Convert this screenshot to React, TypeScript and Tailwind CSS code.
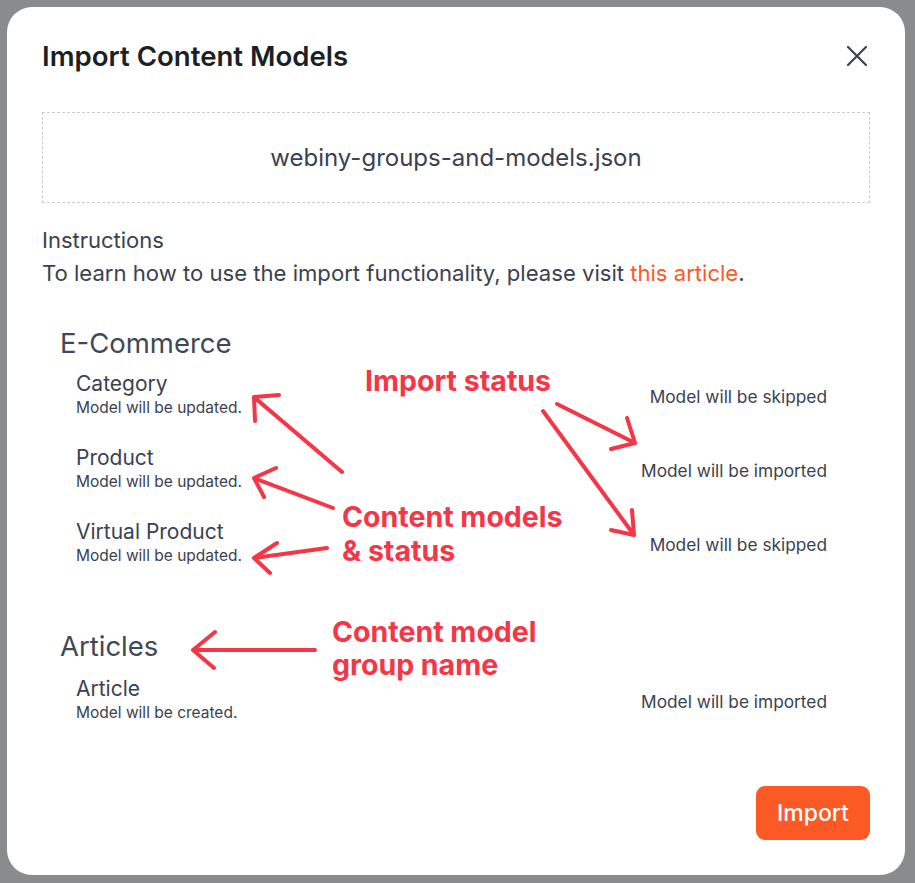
import React from "react";

interface ModelRow {
  name: string;
  note: string;
  status: string;
}

interface Group {
  title: string;
  models: ModelRow[];
}

const groups: Group[] = [
  {
    title: "E-Commerce",
    models: [
      { name: "Category", note: "Model will be updated.", status: "Model will be skipped" },
      { name: "Product", note: "Model will be updated.", status: "Model will be imported" },
      { name: "Virtual Product", note: "Model will be updated.", status: "Model will be skipped" },
    ],
  },
  {
    title: "Articles",
    models: [{ name: "Article", note: "Model will be created.", status: "Model will be imported" }],
  },
];

const font = { fontFamily: "Inter, 'Noto Sans', sans-serif" };

function Annotations() {
  return (
    <>
      <svg
        className="pointer-events-none absolute inset-0"
        width="915"
        height="883"
        viewBox="0 0 915 883"
        fill="none"
        stroke="#f43646"
        strokeWidth="4"
        strokeLinecap="round"
        strokeLinejoin="round"
        aria-hidden="true"
      >
        <path d="M342 472 L254 397 M279 395 L254 397 L255 421" />
        <path d="M333 508 L254 478 M276 468 L254 478 L264 497" />
        <path d="M327 548 L254 558 M277 543 L254 558 L270 573" />
        <path d="M315 650 L193 650 M215 632 L193 650 L214 668" />
        <path d="M557 404 L635 443 M627 418 L635 443 L611 449" />
        <path d="M543 411 L634 535 M632 510 L634 535 L611 530" />
      </svg>
      <div className="pointer-events-none absolute left-[365px] top-[364px] text-[28.5px] font-bold leading-[34px] text-[#f43646]">
        Import status
      </div>
      <div className="pointer-events-none absolute left-[342px] top-[500px] text-[28.5px] font-bold leading-[34px] text-[#f43646]">
        Content models
        <br />& status
      </div>
      <div className="pointer-events-none absolute left-[332px] top-[615px] text-[28.5px] font-bold leading-[33px] text-[#f43646]">
        Content model
        <br />
        group name
      </div>
    </>
  );
}

export default function App() {
  return (
    <div className="relative h-[883px] w-[915px] overflow-hidden bg-[#8a8b8d] p-[7px]" style={font}>
      <div className="flex h-[868px] w-[898px] flex-col rounded-[25px] bg-white px-[35px] pb-[35px] pt-[33px]">
        <div className="flex h-[32px] items-center justify-between">
          <h2 className="text-[27.6px] font-semibold leading-[32px] text-[#1c1f24]">Import Content Models</h2>
          <button type="button" className="mr-[1px] text-[#3b4350]" aria-label="Close">
            <svg width="24" height="24" viewBox="0 0 24 24" fill="none" stroke="currentColor" strokeWidth="2.2" strokeLinecap="round">
              <path d="M3 3 L21 21 M21 3 L3 21" />
            </svg>
          </button>
        </div>

        <div className="mt-[40px] flex h-[91px] items-center justify-center border border-dashed border-[#c9cbce]">
          <span className="text-[24px] text-[#3a4250]">webiny-groups-and-models.json</span>
        </div>

        <p className="mt-[23px] text-[22px] leading-[28px] text-[#3a4250]">Instructions</p>
        <p className="mt-[5px] text-[22.1px] leading-[28px] text-[#3a4250]">
          To learn how to use the import functionality, please visit{" "}
          <a href="#" className="text-[#fa5a28]">
            this article
          </a>
          .
        </p>

        <div className="mt-[39px] flex flex-col pl-[18px] pr-[43px]">
          {groups.map((g, gi) => (
            <div key={g.title} className={gi > 0 ? "mt-[63px]" : ""}>
              <div className="text-[27.5px] leading-[34px] text-[#3f4856]">{g.title}</div>
              <div className={`flex flex-col gap-[27px] ${gi > 0 ? "mt-[13px]" : "mt-[11px]"}`}>
                {g.models.map((m) => (
                  <div key={m.name} className="flex items-center justify-between pl-[16px]">
                    <div>
                      <div className="text-[21px] leading-[26px] text-[#3a4250]">{m.name}</div>
                      <div className="mt-[1px] text-[15.5px] leading-[20px] text-[#3a4250]">{m.note}</div>
                    </div>
                    <div className="pt-[4px] text-[17.3px] text-[#3a4250]">{m.status}</div>
                  </div>
                ))}
              </div>
            </div>
          ))}
        </div>

        <div className="mt-auto flex justify-end">
          <button
            type="button"
            className="h-[54px] w-[114px] rounded-[9px] bg-[#fc5a24] text-[23px] font-medium text-white"
          >
            Import
          </button>
        </div>
      </div>
      <Annotations />
    </div>
  );
}
